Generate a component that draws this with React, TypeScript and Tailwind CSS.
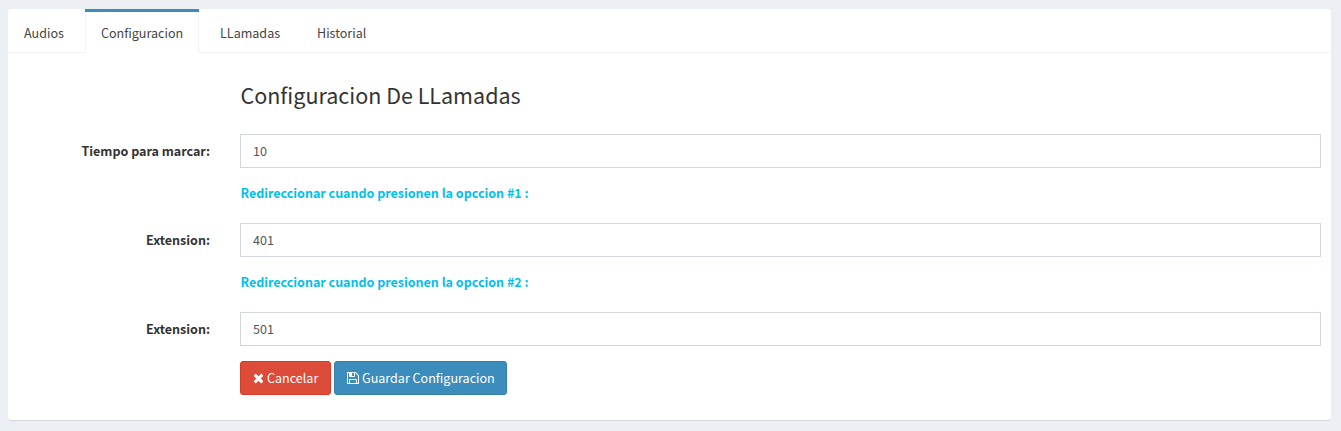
import React, { useState } from "react";

const TABS = [
  { name: "Audios", box: "w-[72px]" },
  { name: "Configuracion", box: "w-[114px]" },
  { name: "LLamadas", box: "w-[92px]" },
  { name: "Historial", box: "w-[82px]" },
];

function TimesIcon() {
  return (
    <svg viewBox="0 0 1408 1792" className="h-[14px] w-[11px] shrink-0" fill="currentColor">
      <path d="M1298 1322q0 40-28 68l-136 136q-28 28-68 28t-68-28l-294-294-294 294q-28 28-68 28t-68-28l-136-136q-28-28-28-68t28-68l294-294-294-294q-28-28-28-68t28-68l136-136q28-28 68-28t68 28l294 294 294-294q28-28 68-28t68 28l136 136q28 28 28 68t-28 68l-294 294 294 294q28 28 28 68z" />
    </svg>
  );
}

function FloppyIcon() {
  return (
    <svg viewBox="0 0 1536 1792" className="h-[14px] w-[12px] shrink-0" fill="currentColor">
      <path d="M384 1536h768v-384h-768v384zm896 0h128v-896q0-14-10-38.5t-20-34.5l-281-281q-10-10-34-20t-39-10v416q0 40-28 68t-68 28h-576q-40 0-68-28t-28-68v-416h-128v1280h128v-416q0-40 28-68t68-28h832q40 0 68 28t28 68v416zm-384-928v-320q0-13-9.5-22.5t-22.5-9.5h-192q-13 0-22.5 9.5t-9.5 22.5v320q0 13 9.5 22.5t22.5 9.5h192q13 0 22.5-9.5t9.5-22.5zm640 32v928q0 40-28 68t-68 28h-1344q-40 0-68-28t-28-68v-1344q0-40 28-68t68-28h928q40 0 88 20t76 48l280 280q28 28 48 76t20 88z" />
    </svg>
  );
}

function Field({ label, initial }: { label: string; initial: string }) {
  const [value, setValue] = useState(initial);
  return (
    <label className="flex h-[34px] items-center">
      <span className="w-[202px] shrink-0 text-right font-bold tracking-[-0.02px] text-[#333]">
        {label}
      </span>
      <input
        value={value}
        onChange={(e) => setValue(e.target.value)}
        className="mr-[10px] ml-[30px] h-[34px] min-w-0 flex-1 border border-[#d2d6de] bg-white px-3 pb-[2px] text-[#555] outline-none"
      />
    </label>
  );
}

function Hint({ children }: { children: React.ReactNode }) {
  return (
    <p className="mt-[15px] mb-5 ml-[232px] h-5 pl-[0.5px] font-bold tracking-[-0.03px] text-[#00c0ef]">
      {children}
    </p>
  );
}

export default function App() {
  const [active, setActive] = useState("Configuracion");
  return (
    <div className="h-[431px] bg-[#ecf0f5] pt-[9px] pr-[10px] pl-2 font-['Noto_Sans_CJK_SC',sans-serif] text-[12.55px] leading-5 text-[#333]">
      <main className="h-[411px] rounded-[3px] bg-white shadow-[0_1px_1px_rgba(0,0,0,0.1)]">
        <nav className="flex h-[44px] gap-[5px] border-b border-[#f4f4f4]">
          {TABS.map((tab) => (
            <button
              key={tab.name}
              onClick={() => setActive(tab.name)}
              className={`${tab.box} flex h-[44px] flex-col border-t-[3px] text-left text-[#444] ${
                active === tab.name ? "border-[#3c8dbc] bg-white" : "border-transparent"
              }`}
            >
              <span
                className={`w-full flex-1 border-x pt-[11px] pl-[15px] ${
                  active === tab.name ? "border-[#f4f4f4]" : "border-transparent"
                }`}
              >
                {tab.name}
              </span>
            </button>
          ))}
        </nav>
        <form onSubmit={(e) => e.preventDefault()} className="pt-[29px]">
          <h3 className="mb-[26px] ml-[232px] h-[26px] pl-[0.5px] text-[21.5px] leading-[26px]">
            Configuracion De LLamadas
          </h3>
          <Field label="Tiempo para marcar:" initial="10" />
          <Hint>Redireccionar cuando presionen la opccion #1 :</Hint>
          <Field label="Extension:" initial="401" />
          <Hint>Redireccionar cuando presionen la opccion #2 :</Hint>
          <Field label="Extension:" initial="501" />
          <div className="mt-[15px] ml-[232px] flex gap-[3px] text-white">
            <button className="flex h-[34px] w-[91px] items-center gap-[3px] rounded-[3px] border border-[#d73925] bg-[#dd4b39] pl-3 whitespace-nowrap">
              <TimesIcon />
              Cancelar
            </button>
            <button className="flex h-[34px] w-[173px] items-center gap-[3px] rounded-[3px] border border-[#367fa9] bg-[#3c8dbc] pl-3 whitespace-nowrap">
              <FloppyIcon />
              Guardar Configuracion
            </button>
          </div>
        </form>
      </main>
    </div>
  );
}
